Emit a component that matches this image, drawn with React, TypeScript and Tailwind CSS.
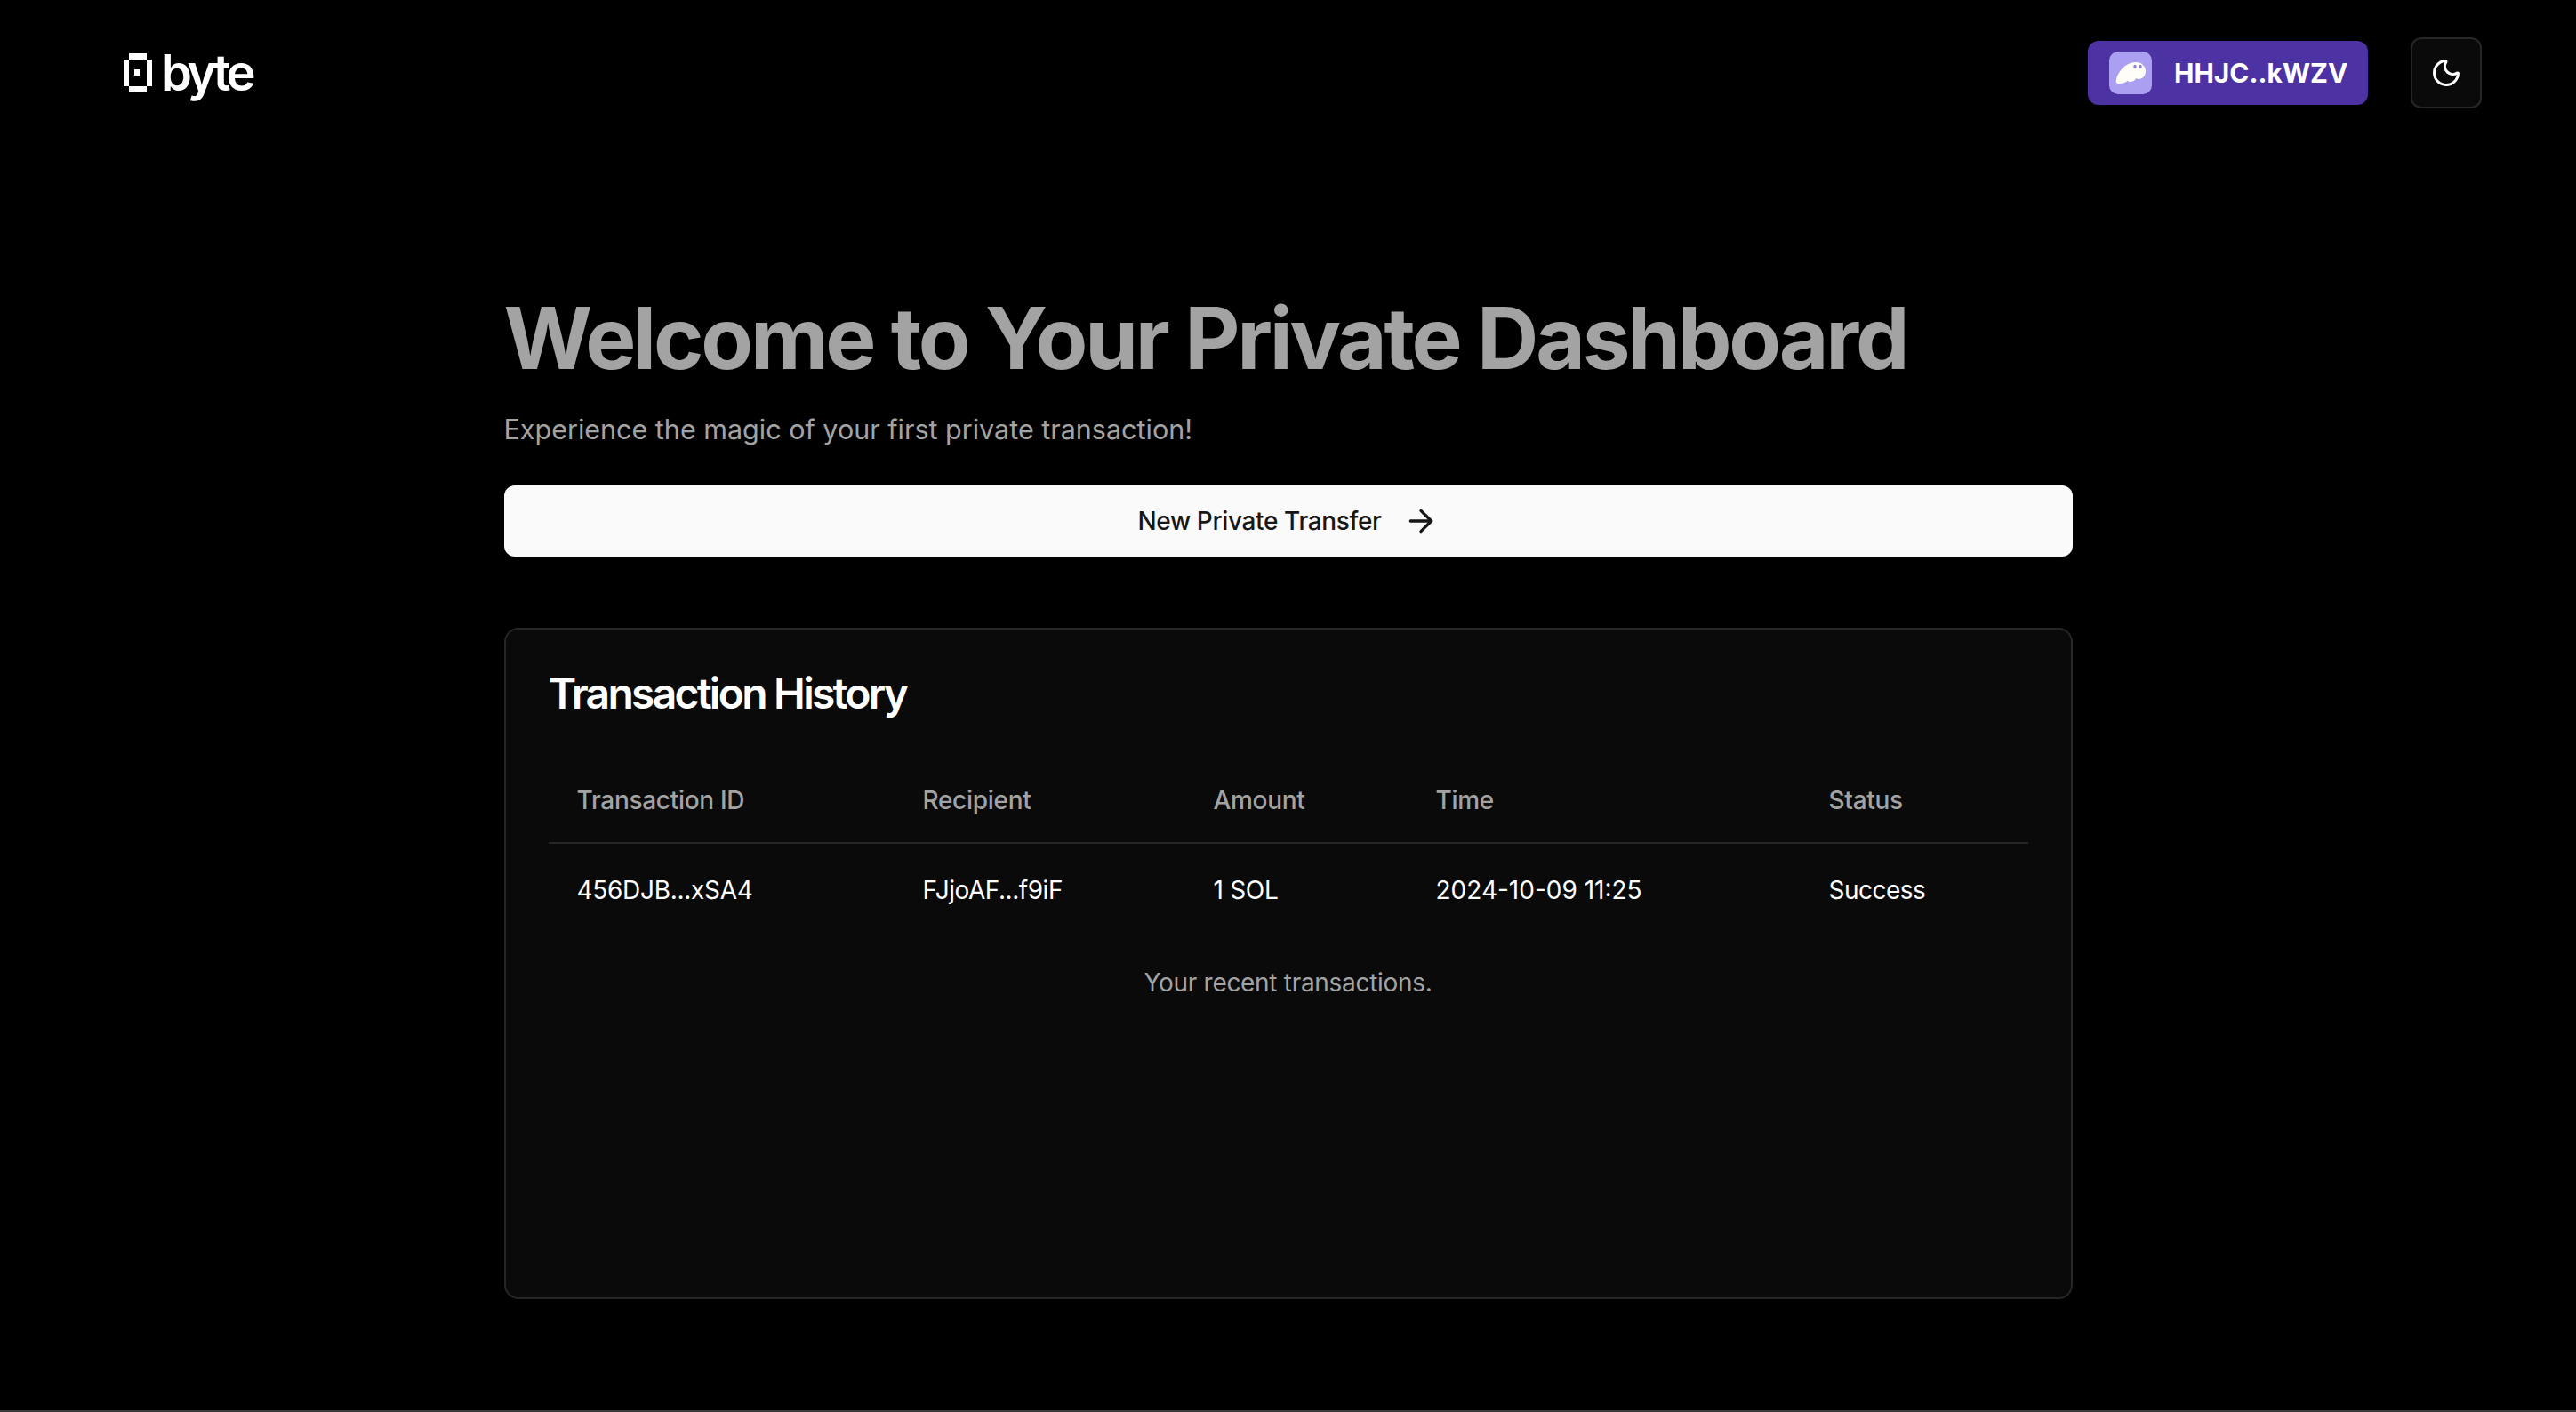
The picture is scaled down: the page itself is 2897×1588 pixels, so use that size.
import React from 'react';
import { ArrowRight, Moon } from 'lucide-react';

const columns = [
  { label: 'Transaction ID', value: '456DJB...xSA4', width: 'w-[389px]', valueClass: '' },
  { label: 'Recipient', value: 'FJjoAF...f9iF', width: 'w-[327px]', valueClass: 'tracking-[-0.45px]' },
  { label: 'Amount', value: '1 SOL', width: 'w-[250px]', valueClass: '' },
  { label: 'Time', value: '2024-10-09 11:25', width: 'w-[442px]', valueClass: 'tracking-[0px]' },
  { label: 'Status', value: 'Success', width: 'w-[256px]', valueClass: 'tracking-[-0.5px]' },
];

const ByteLogo = () => (
  <svg width="32" height="44" viewBox="0 0 32 44" fill="#fff" className="shrink-0">
    <rect x="6" y="0" width="20" height="7" />
    <rect x="0" y="7" width="6" height="30" />
    <rect x="26" y="7" width="6" height="30" />
    <rect x="6" y="37" width="20" height="7" />
    <rect x="12" y="18" width="7" height="7" />
  </svg>
);

const PhantomIcon = () => (
  <div className="w-12 h-12 rounded-[10px] bg-[#ab9ff2] flex items-center justify-center shrink-0">
    <svg width="34" height="24" viewBox="0 0 34 24">
      <path
        d="M1 20C2 12 11 0 23 0c7 0 11 5 11 10 0 6-4 9-8 9-1 0-2-.3-3-1-1 3-4 4-7 4-1 0-2-.5-2-1.500C12 23 8 24 4 24c-3 0-4-2-3-4z"
        fill="#fffdf8"
      />
      <ellipse cx="22" cy="5" rx="1.700" ry="2.200" fill="#8f82d8" />
      <ellipse cx="28" cy="5" rx="1.700" ry="2.200" fill="#8f82d8" />
    </svg>
  </div>
);

const App = () => {
  return (
    <div className="min-h-screen bg-black text-white border-b-2 border-[#3a3a3a] font-['Inter',sans-serif]">
      <header className="flex justify-between items-center pl-[139px] pr-[106px] pt-[42px]">
        <div className="flex items-center gap-[10px]">
          <ByteLogo />
          <span className="text-[56px] leading-none font-semibold tracking-[-0.08em]">byte</span>
        </div>
        <div className="flex items-center gap-[48px]">
          <button className="h-[72px] w-[315px] rounded-[12px] bg-[#4c32a3] flex items-center pl-6 gap-[25px]">
            <PhantomIcon />
            <span className="text-[30px] font-bold">HHJC..kWZV</span>
          </button>
          <button className="w-20 h-20 rounded-[12px] border-2 border-[#262626] bg-[#0a0a0a] flex items-center justify-center">
            <Moon size={36} strokeWidth={2} color="#fff" />
          </button>
        </div>
      </header>

      <main className="w-[1764px] mx-auto pt-[210px]">
        <h1 className="text-[96px] leading-none font-bold tracking-[-3.2px] text-[#a3a3a3]">
          Welcome to Your Private Dashboard
        </h1>
        <p className="mt-[31px] text-[30.5px] leading-[48px] text-[#a3a3a3]">
          Experience the magic of your first private transaction!
        </p>
        <button className="mt-[39px] w-full h-20 rounded-[12px] bg-[#fafafa] text-[#171717] text-[28px] tracking-[-0.37px] font-medium flex items-center justify-center gap-6">
          New Private Transfer
          <ArrowRight size={40} strokeWidth={2} />
        </button>

        <section className="mt-20 h-[755px] rounded-[16px] border-2 border-[#262626] bg-[#0a0a0a] p-12">
          <h2 className="text-[48px] leading-none font-semibold tracking-[-2.75px]">Transaction History</h2>
          <table className="mt-12 w-full table-fixed text-[28px] tracking-[-0.3px] caption-bottom">
            <caption className="mt-8 text-[#a3a3a3] leading-10">Your recent transactions.</caption>
            <thead>
              <tr className="border-b-2 border-[#262626]">
                {columns.map((col) => (
                  <th key={col.label} className={`${col.width} h-24 px-8 text-left font-medium text-[#a3a3a3]`}>
                    {col.label}
                  </th>
                ))}
              </tr>
            </thead>
            <tbody>
              <tr>
                {columns.map((col) => (
                  <td key={col.label} className={`${col.valueClass} p-8 leading-10`}>
                    {col.value}
                  </td>
                ))}
              </tr>
            </tbody>
          </table>
        </section>
      </main>
    </div>
  );
};

export default App;
